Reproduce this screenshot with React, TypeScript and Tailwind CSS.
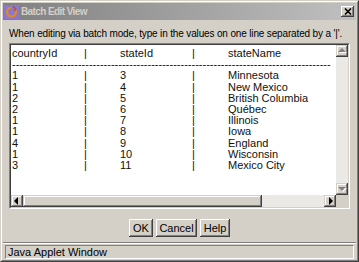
import { ReactElement } from "react";

const rows: [string, string, string][] = [
  ["1", "3", "Minnesota"],
  ["1", "4", "New Mexico"],
  ["2", "5", "British Columbia"],
  ["2", "6", "Québec"],
  ["1", "7", "Illinois"],
  ["1", "8", "Iowa"],
  ["4", "9", "England"],
  ["1", "10", "Wisconsin"],
  ["3", "11", "Mexico City"],
];

const raised =
  "shadow-[inset_-1px_-1px_#404040,inset_1px_1px_#d4d0c8,inset_-2px_-2px_#808080,inset_2px_2px_#ffffff]";
const buttonRaised =
  "shadow-[inset_-1px_-1px_#404040,inset_1px_1px_#ffffff,inset_-2px_-2px_#808080]";

const Line = ({ a, b, c }: { a: string; b: string; c: string }): ReactElement => (
  <div className="flex h-[11.2px] leading-[11.2px] whitespace-nowrap">
    <span className="w-[72px]">{a}</span>
    <span className="w-[36px]">|</span>
    <span className="w-[72px]">{b}</span>
    <span className="w-[36px]">|</span>
    <span>{c}</span>
  </div>
);

const Arrow = ({ dir, disabled }: { dir: "up" | "down" | "left" | "right"; disabled?: boolean }) => {
  const pts = {
    up: "2,7 6,3 10,7",
    down: "2,4 6,8 10,4",
    left: "7,2 3,6 7,10",
    right: "5,2 9,6 5,10",
  }[dir];
  return (
    <div className={`w-[12px] h-[12px] bg-[#d4d0c8] ${raised} flex items-center justify-center`}>
      <svg width="12" height="12" viewBox="0 0 12 12">
        {disabled && <polygon points={pts} fill="#ffffff" transform="translate(1,1)" />}
        <polygon points={pts} fill={disabled ? "#808080" : "#000000"} />
      </svg>
    </div>
  );
};

const Button = ({ label, width }: { label: string; width: string }) => (
  <div
    className={`${width} h-[18px] bg-[#d4d0c8] ${buttonRaised} flex items-center justify-center text-[11px] text-black`}
  >
    {label}
  </div>
);

export default function App(): ReactElement {
  return (
    <div
      className="w-[359px] h-[262px] bg-[#d4d0c8] border border-t-[#d4d0c8] border-l-[#d4d0c8] border-r-[#404040] border-b-[#404040] text-[11px] text-black"
      style={{ fontFamily: '"Liberation Sans", Arial, sans-serif' }}
    >
      <div className="h-full flex flex-col border border-t-white border-l-white border-r-[#808080] border-b-[#808080] p-px">
        {/* title bar */}
        <div className="h-[17px] flex items-center bg-gradient-to-r from-[#808080] to-[#c0c0c0] pl-px pr-[2px]">
          <svg width="15" height="14" viewBox="0 0 15 14" className="shrink-0">
            <rect x="0" y="0" width="15" height="14" fill="#8a78d0" />
            <path d="M7.5 2.5a4.5 4.5 0 1 0 4.2 3" fill="none" stroke="#e08a20" strokeWidth="2.2" />
            <path d="M9 1.5l2.5 2-1 2.5" fill="none" stroke="#c05010" strokeWidth="1.4" />
          </svg>
          <span className="ml-[2px] font-bold text-[10px] text-[#d4d0c8] tracking-[-0.6px]">Batch Edit View</span>
          <div className={`ml-auto w-[13px] h-[11px] bg-[#d4d0c8] ${buttonRaised} flex items-center justify-center`}>
            <svg width="8" height="7" viewBox="0 0 8 7">
              <path d="M1 0.5l6 6M7 0.5l-6 6" stroke="#000" strokeWidth="1.6" />
            </svg>
          </div>
        </div>

        {/* label */}
        <div className="mt-[7px] pl-[6px] h-[13px] leading-[13px] whitespace-nowrap text-[10px] tracking-[-0.15px]">
          When editing via batch mode, type in the values on one line separated by a '|'.
        </div>

        {/* text area */}
        <div className="mt-[3px] mx-[6px] h-[166px] flex flex-col border border-t-[#808080] border-l-[#808080] border-r-white border-b-white">
          <div className="flex-1 min-h-0 flex flex-col bg-white border border-t-[#404040] border-l-[#404040] border-r-[#d4d0c8] border-b-[#d4d0c8]">
            <div className="flex flex-1 min-h-0">
              <div className="flex-1 min-w-0 overflow-hidden pl-px pt-[3px] text-[#111]">
                <Line a="countryId" b="stateId" c="stateName" />
                <div className="h-[11.2px] leading-[11.2px] whitespace-nowrap">
                  {"-".repeat(87)}
                </div>
                {rows.map(([a, b, c]) => (
                  <Line key={b} a={a} b={b} c={c} />
                ))}
              </div>
              <div className="w-[12px] flex flex-col bg-[#ebe9e5]">
                <Arrow dir="up" disabled />
                <div className="flex-1" />
                <Arrow dir="down" disabled />
              </div>
            </div>
            <div className="h-[12px] flex">
              <Arrow dir="left" />
              <div className={`w-[239px] h-[12px] bg-[#d4d0c8] ${raised}`} />
              <div className="flex-1 bg-[#ebe9e5]" />
              <Arrow dir="right" />
              <div className="w-[12px] bg-[#d4d0c8]" />
            </div>
          </div>
        </div>

        {/* buttons */}
        <div className="mt-[10px] flex justify-center gap-[3px]">
          <Button label="OK" width="w-[24px]" />
          <Button label="Cancel" width="w-[41px]" />
          <Button label="Help" width="w-[30px]" />
        </div>

        {/* status bar */}
        <div className="mt-[5px] border-t border-t-[#808080]" />
        <div className="border-t border-t-white" />
        <div className="mx-[2px] mt-px h-[14px] flex items-center pl-[2px] border border-t-[#808080] border-l-[#808080] border-r-white border-b-white leading-[12px]">
          Java Applet Window
        </div>
      </div>
    </div>
  );
}
